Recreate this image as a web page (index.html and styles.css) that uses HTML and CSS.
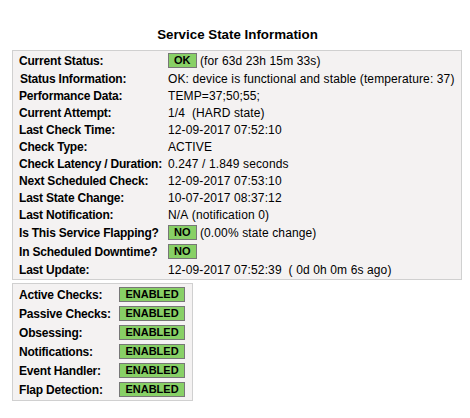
FILE: index.html
```html
<!DOCTYPE html>
<html>
<head>
<meta charset="utf-8">
<link rel="stylesheet" href="styles.css">
</head>
<body>
<div class="page">
  <div class="title">Service State Information</div>
  <div class="panel info">
    <div class="row tall"><span class="var">Current Status:</span><span class="val"><span class="badge">OK</span>&nbsp;(for 63d 23h 15m 33s)</span></div>
    <div class="row"><span class="var indent">Status Information:</span><span class="val">OK: device is functional and stable (temperature: 37)</span></div>
    <div class="row"><span class="var">Performance Data:</span><span class="val">TEMP=37;50;55;</span></div>
    <div class="row"><span class="var">Current Attempt:</span><span class="val">1/4&nbsp;&nbsp;(HARD state)</span></div>
    <div class="row"><span class="var">Last Check Time:</span><span class="val">12-09-2017 07:52:10</span></div>
    <div class="row"><span class="var">Check Type:</span><span class="val">ACTIVE</span></div>
    <div class="row"><span class="var">Check Latency / Duration:</span><span class="val">0.247&nbsp;/&nbsp;1.849 seconds</span></div>
    <div class="row"><span class="var">Next Scheduled Check:&nbsp;&nbsp;</span><span class="val">12-09-2017 07:53:10</span></div>
    <div class="row"><span class="var">Last State Change:</span><span class="val">10-07-2017 08:37:12</span></div>
    <div class="row"><span class="var">Last Notification:</span><span class="val">N/A&nbsp;(notification 0)</span></div>
    <div class="row tall"><span class="var">Is This Service Flapping?</span><span class="val"><span class="badge">NO</span>&nbsp;(0.00% state change)</span></div>
    <div class="row tall"><span class="var">In Scheduled Downtime?</span><span class="val"><span class="badge">NO</span></span></div>
    <div class="row"><span class="var">Last Update:</span><span class="val">12-09-2017 07:52:39&nbsp;&nbsp;( 0d 0h 0m 6s ago)</span></div>
  </div>
  <div class="panel checks">
    <div class="row tall"><span class="var">Active Checks:</span><span class="badge wide">ENABLED</span></div>
    <div class="row tall"><span class="var">Passive Checks:</span><span class="badge wide">ENABLED</span></div>
    <div class="row tall"><span class="var">Obsessing:</span><span class="badge wide">ENABLED</span></div>
    <div class="row tall"><span class="var">Notifications:</span><span class="badge wide">ENABLED</span></div>
    <div class="row tall"><span class="var">Event Handler:</span><span class="badge wide">ENABLED</span></div>
    <div class="row tall"><span class="var">Flap Detection:</span><span class="badge wide">ENABLED</span></div>
  </div>
</div>
</body>
</html>
```

FILE: styles.css
```css
html, body {
  margin: 0;
  padding: 0;
  background: #ffffff;
}

body {
  font-family: "Liberation Sans", Arial, sans-serif;
  color: #000000;
}

.page {
  width: 470px;
  padding-top: 27px;
  display: flex;
  flex-direction: column;
  align-items: flex-start;
}

.title {
  align-self: stretch;
  text-align: center;
  padding-left: 5px;
  font-size: 13.33px;
  font-weight: bold;
  line-height: 15px;
  margin-bottom: 8px;
}

.panel {
  margin-left: 12px;
  background: #f4f2f2;
  border: 1px solid #d0d0d0;
  box-sizing: border-box;
  display: flex;
  flex-direction: column;
}

.info {
  width: 450px;
  padding-bottom: 1px;
}

.checks {
  width: 181px;
  margin-top: 3px;
  padding: 1px 0;
}

.row {
  display: flex;
  align-items: center;
  height: 17px;
  white-space: nowrap;
}

.row.tall {
  height: 19px;
}

.var {
  box-sizing: border-box;
  padding-left: 6px;
  font-size: 12px;
  font-weight: bold;
  letter-spacing: -0.2px;
  flex: none;
}

.info .var {
  width: 155px;
}

.checks .var {
  width: 106px;
}

.var.indent {
  padding-left: 7px;
}

.val {
  font-size: 12px;
  letter-spacing: 0.12px;
  display: flex;
  align-items: center;
}

.badge {
  display: inline-block;
  box-sizing: border-box;
  height: 15px;
  line-height: 13px;
  padding: 0 5px;
  background: #88d066;
  border: 1px solid #777777;
  font-size: 11px;
  font-weight: bold;
  letter-spacing: 0;
  color: #000000;
}

.badge.wide {
  width: 66px;
  padding: 0;
  text-align: center;
}
```
